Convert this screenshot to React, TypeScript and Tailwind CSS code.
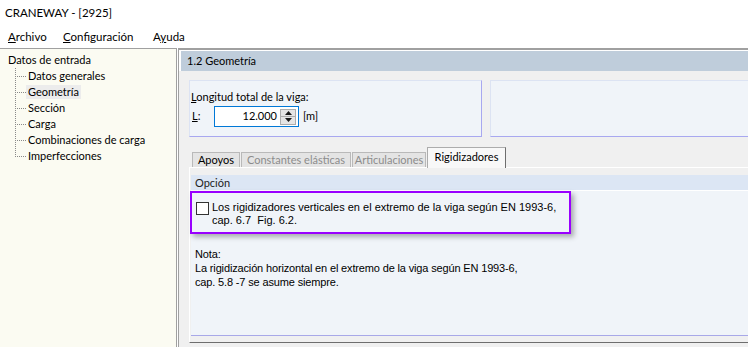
import React from 'react';

const ui = "font-['Lato',sans-serif]";
const ms = "font-['Liberation_Sans',Arial,sans-serif]";

const treeItems = ['Datos generales', 'Geometría', 'Sección', 'Carga', 'Combinaciones de carga', 'Imperfecciones'];

const Connector: React.FC<{ last: boolean }> = ({ last }) => (
  <svg width="11" height="16" className="shrink-0">
    <line x1="0.5" y1="0" x2="0.5" y2={last ? 9 : 16} stroke="#8a8a8a" strokeDasharray="1 1" />
    <line x1="2" y1="8.5" x2="11" y2="8.5" stroke="#8a8a8a" strokeDasharray="1 1" />
  </svg>
);

const Spinner: React.FC = () => (
  <div className="flex flex-col w-[16px] h-[16px] border border-[#adadad] bg-[#e5e5e5]">
    <div className="flex-1 flex items-center justify-center border-b border-[#adadad]">
      <svg width="7" height="4"><path d="M3.5 0 L7 4 L0 4 Z" fill="#1a1a1a" /></svg>
    </div>
    <div className="flex-1 flex items-center justify-center">
      <svg width="7" height="4"><path d="M0 0 L7 0 L3.5 4 Z" fill="#1a1a1a" /></svg>
    </div>
  </div>
);

const tabs = [
  { label: 'Apoyos', w: 'w-[48px]', state: 'normal' },
  { label: 'Constantes elásticas', w: 'w-[110px]', state: 'disabled' },
  { label: 'Articulaciones', w: 'w-[74px]', state: 'disabled' },
  { label: 'Rigidizadores', w: 'w-[79px]', state: 'active' },
];

const App: React.FC = () => {
  return (
    <div className={`w-[748px] h-[347px] overflow-hidden bg-white flex flex-col text-[11px] text-black ${ui}`}>
      {/* Title */}
      <div className="h-[25px] shrink-0 flex items-center pl-[5px] text-[11.5px]">CRANEWAY - [2925]</div>

      {/* Menu */}
      <div className="h-[23px] shrink-0 flex items-center pl-[8px] text-[11.5px]">
        <span className="w-[55px]"><u>A</u>rchivo</span>
        <span className="w-[90px]"><u>C</u>onfiguración</span>
        <span>A<u>y</u>uda</span>
      </div>

      {/* Main */}
      <div className="flex-1 flex min-h-0">
        {/* Navigator */}
        <div className="w-[177px] shrink-0 bg-[#fbfbf2] border-t border-r border-[#a0a0a0] pt-[3px]">
          <div className="h-[16px] leading-[16px] pl-[8px]">Datos de entrada</div>
          {treeItems.map((item, i) => (
            <div key={item} className="h-[16px] flex items-center pl-[15px]">
              <Connector last={i === treeItems.length - 1} />
              <span
                className={`h-[14px] leading-[14px] px-[2px] ${item === 'Geometría' ? 'bg-[#ececec]' : ''}`}
              >
                {item}
              </span>
            </div>
          ))}
        </div>

        {/* Right panel */}
        <div className="ml-[1px] flex-1 min-w-0 overflow-hidden bg-[#f0f0f0] border-t-2 border-l border-[#a0a0a0] flex flex-col">
          <div className="h-[21px] shrink-0 bg-[#bfcddb] border-t border-l-2 border-white pl-[6px] flex items-center">
            1.2 Geometría
          </div>

          {/* Group boxes */}
          <div className="mt-[9px] ml-[10px] flex gap-[8px] shrink-0">
            <div className="w-[293px] shrink-0 h-[57px] bg-[#f0f4f9] border border-t-[#dce3f3] border-l-[#dce3f3] border-r-[#a8a8f0] border-b-[#a8a8f0] pl-[1px] pt-[9px]">
              <div className="h-[14px] leading-[14px]"><u>L</u>ongitud total de la viga:</div>
              <div className="mt-[2px] flex items-center pl-[1px]">
                <span className="w-[22px]"><u>L</u>:</span>
                <div className="w-[85px] h-[21px] bg-white border border-[#0078d7] flex items-center justify-end pr-[2px]">
                  <span className="mr-[3px]">12.000</span>
                  <Spinner />
                </div>
                <span className="ml-[4px]">[m]</span>
              </div>
            </div>
            <div className="w-[270px] shrink-0 h-[57px] bg-[#f0f4f9] border border-t-[#dce3f3] border-l-[#dce3f3] border-r-[#a8a8f0] border-b-[#a8a8f0]" />
          </div>

          {/* Tabs */}
          <div className="mt-[10px] ml-[10px] flex flex-col shrink-0">
            <div className="h-[20px] flex items-end pl-[3px]">
              {tabs.map((t) => (
                <div
                  key={t.label}
                  className={`${t.w} shrink-0 ml-[1px] first:ml-0 flex items-center justify-center whitespace-nowrap border border-b-0 ${
                    t.state === 'active'
                      ? 'h-[21px] -mb-px relative z-10 bg-[#f8f8f8] border-[#acacac] border-r-[#6e6e6e] pb-[2px]'
                      : 'h-[15px] bg-[#e4e4e4] border-[#b9b9b9]'
                  } ${t.state === 'disabled' ? 'text-[#8c8c8c]' : 'text-black'}`}
                >
                  {t.label}
                </div>
              ))}
            </div>
            <div className="h-[176px] bg-[#f0f0f0] border-t border-l border-white border-b border-b-[#6e6e6e] pt-[7px] pl-[1px] pb-[6px]">
              <div className="h-full flex flex-col bg-[#f0f4f9] border-b border-[#a8a8e8]">
                <div className="h-[16px] shrink-0 bg-[#dce6f4] border-b border-white pl-[4px] leading-[15px] text-[#222]">
                  Opción
                </div>
                <div className={`${ms} text-[11px]`}>
                  <div className="-ml-px w-[381px] h-[43px] border-2 border-[#9900ff] shadow-[3px_3px_5px_rgba(0,0,0,0.3)] pl-[4px] pt-[8px] flex items-start">
                    <div className="mt-[1px] w-[13px] h-[13px] shrink-0 border border-[#333] bg-white" />
                    <div className="ml-[3px] leading-[13px]">
                      Los rigidizadores verticales en el extremo de la viga según EN 1993-6,
                      <br />
                      cap. 6.7&nbsp; Fig. 6.2.
                    </div>
                  </div>
                  <div className="mt-[13px] pl-[4px] leading-[14px] tracking-[-0.15px]">
                    Nota:
                    <br />
                    La rigidización horizontal en el extremo de la viga según EN 1993-6,
                    <br />
                    cap. 5.8 -7 se asume siempre.
                  </div>
                </div>
              </div>
            </div>
          </div>
        </div>
      </div>
    </div>
  );
};

export default App;
